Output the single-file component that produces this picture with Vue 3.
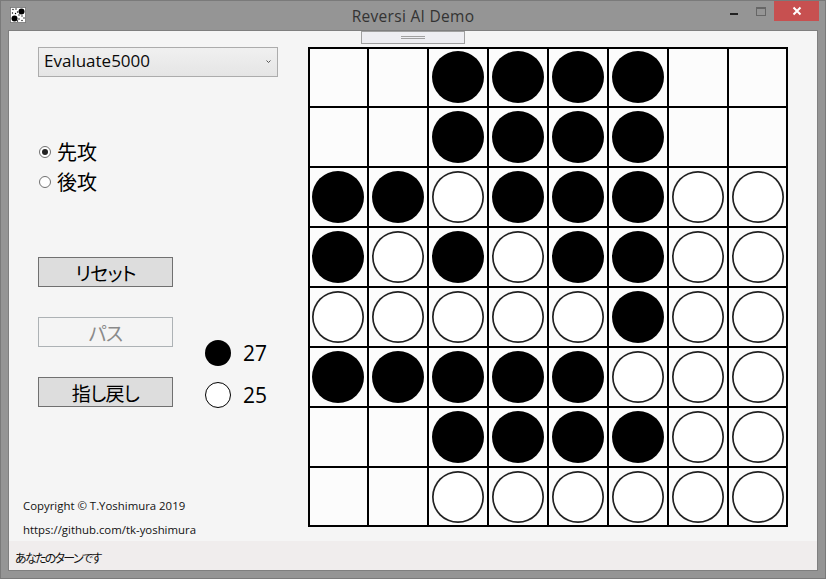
<template>
  <div class="window">
    <div class="titlebar">
      <svg class="app-icon" width="16" height="16" viewBox="0 0 16 16">
        <rect x="0.5" y="0.5" width="15" height="15" fill="#fff" stroke="#444" stroke-dasharray="1 1" />
        <g fill="#000">
          <circle v-for="d in dots" :key="d[0] + '-' + d[1]" :cx="d[0]" :cy="d[1]" r="0.7" />
        </g>
        <circle cx="11.5" cy="4.5" r="3" fill="#000" />
        <circle cx="4.5" cy="11.5" r="3" fill="#000" />
      </svg>
      <div class="title">Reversi AI Demo</div>
      <div class="controls">
        <span class="min"></span>
        <span class="max"></span>
        <span class="close">
          <svg width="10" height="10" viewBox="0 0 10 10">
            <path d="M1.5 1.5 L8.5 8.5 M8.5 1.5 L1.5 8.5" stroke="#fff" stroke-width="2" fill="none" />
          </svg>
        </span>
      </div>
    </div>

    <div class="client">
      <div class="handle"><i></i><i></i></div>

      <div class="main">
        <div class="side">
          <div class="combo">
            <span class="combo-text">Evaluate5000</span>
            <svg width="5" height="4" viewBox="0 0 5 4">
              <path d="M0.5 0.5 L2.5 2.5 L4.5 0.5" stroke="#555" stroke-width="1" fill="none" />
            </svg>
          </div>

          <div class="radios">
            <div class="radio">
              <span class="mark on"></span>
              <span class="label">先攻</span>
            </div>
            <div class="radio">
              <span class="mark"></span>
              <span class="label">後攻</span>
            </div>
          </div>

          <div class="actions">
            <div class="buttons">
              <div class="btn">リセット</div>
              <div class="btn disabled">パス</div>
              <div class="btn">指し戻し</div>
            </div>
            <div class="score">
              <div class="score-row">
                <span class="disc black"></span>
                <span>27</span>
              </div>
              <div class="score-row">
                <span class="disc white"></span>
                <span>25</span>
              </div>
            </div>
          </div>

          <div class="credits">
            <div>Copyright © T.Yoshimura 2019</div>
            <div>https://github.com/tk-yoshimura</div>
          </div>
        </div>

        <div class="board">
          <div class="cell" v-for="(c, i) in cells" :key="i">
            <span v-if="c !== '.'" class="piece" :class="c === 'B' ? 'black' : 'white'"></span>
          </div>
        </div>
      </div>

      <div class="status">あなたのターンです</div>
    </div>
  </div>
</template>

<script setup>
const rows = [
  '..BBBB..',
  '..BBBB..',
  'BBWBBBWW',
  'BWBWBBWW',
  'WWWWWBWW',
  'BBBBBWWW',
  '..BBBBWW',
  '..WWWWWW'
]
const cells = rows.join('').split('')

const dots = [
  [3, 2.5], [6, 2], [7.5, 5], [2.5, 6], [5.5, 6.5], [9, 8], [12, 9], [14, 11], [9, 12], [12, 13.5], [7.5, 14]
]
</script>

<style>
html, body {
  margin: 0;
  background: #959595;
}
</style>

<style scoped>
.window {
  width: 826px;
  height: 579px;
  box-sizing: border-box;
  background: #959595;
  border: 1px solid #7a7a7a;
  display: flex;
  flex-direction: column;
  font-family: "Noto Sans CJK JP", "Noto Sans", sans-serif;
  font-feature-settings: "palt";
  color: #000;
  overflow: hidden;
}

.titlebar {
  height: 29px;
  flex: none;
  display: flex;
  position: relative;
}

.app-icon {
  position: absolute;
  left: 9px;
  top: 6px;
}

.title {
  flex: 1;
  text-align: center;
  font-family: "Open Sans", sans-serif;
  font-size: 15.5px;
  line-height: 31px;
  color: #333;
  letter-spacing: 0.3px;
}

.controls {
  position: absolute;
  right: 6px;
  top: 0;
  display: flex;
  align-items: flex-start;
}

.min {
  width: 8px;
  height: 2px;
  background: #222;
  margin: 12px 18px 0 0;
}

.max {
  width: 8px;
  height: 6px;
  border: 1px solid #666;
  border-top-width: 2px;
  margin: 6px 8px 0 0;
}

.close {
  width: 45px;
  height: 20px;
  background: #c75050;
  display: flex;
  align-items: center;
  justify-content: center;
}

.client {
  flex: 1;
  margin: 0 7px 7px;
  border: 1px solid #7f7f7f;
  background: #f5f5f5;
  display: flex;
  flex-direction: column;
  position: relative;
  min-height: 0;
}

.handle {
  position: absolute;
  left: 352px;
  top: 0;
  width: 102px;
  height: 11px;
  background: #eeeef2;
  border: 1px solid #a0a0a0;
  display: flex;
  flex-direction: column;
  align-items: center;
  justify-content: center;
  gap: 1px;
}

.handle i {
  display: block;
  width: 24px;
  height: 1px;
  background: #a0a0a0;
}

.main {
  flex: 1;
  display: flex;
  padding-top: 16px;
  min-height: 0;
}

.side {
  width: 299px;
  flex: none;
  display: flex;
  flex-direction: column;
}

.combo {
  width: 240px;
  height: 30px;
  flex: none;
  box-sizing: border-box;
  margin-left: 29px;
  padding: 0 6px 0 5px;
  border: 1px solid #acacac;
  background: linear-gradient(#f0f0f0, #e5e5e5);
  display: flex;
  align-items: center;
  justify-content: space-between;
  font-family: "Open Sans", sans-serif;
  font-size: 17px;
  color: #0a0a0a;
}

.combo-text {
  margin-top: -4px;
}

.radios {
  margin: 60px 0 0 30px;
  display: flex;
  flex-direction: column;
}

.radio {
  height: 30px;
  display: flex;
  align-items: center;
  gap: 6px;
  font-size: 20px;
}

.label {
  margin-top: -2px;
}

.mark {
  width: 10px;
  height: 10px;
  border: 1px solid #707070;
  border-radius: 50%;
  background: #fff;
  position: relative;
}

.mark.on::after {
  content: "";
  position: absolute;
  left: 2px;
  top: 2px;
  width: 6px;
  height: 6px;
  border-radius: 50%;
  background: #222;
}

.actions {
  margin: 60px 0 0 29px;
  display: flex;
}

.buttons {
  display: flex;
  flex-direction: column;
  gap: 30px;
}

.btn {
  width: 135px;
  height: 30px;
  box-sizing: border-box;
  background: #dddddd;
  border: 1px solid #707070;
  font-size: 19px;
  line-height: 29px;
  letter-spacing: -0.7px;
  text-align: center;
}

.btn.disabled {
  background: #f4f4f4;
  border-color: #adb2b5;
  color: #8a8a8a;
}

.score {
  margin: 83px 0 0 32px;
  display: flex;
  flex-direction: column;
  gap: 16px;
}

.score-row {
  height: 26px;
  display: flex;
  align-items: center;
  gap: 12px;
  font-family: "Open Sans", sans-serif;
  font-size: 21px;
}

.disc {
  width: 26px;
  height: 26px;
  box-sizing: border-box;
  border-radius: 50%;
}

.disc.black {
  background: #000;
}

.disc.white {
  background: #fff;
  border: 1px solid #000;
}

.credits {
  margin: auto 0 -1px 14px;
  font-family: "Open Sans", sans-serif;
  font-size: 11.4px;
  line-height: 24px;
  color: #111;
}

.board {
  width: 480px;
  height: 480px;
  flex: none;
  box-sizing: border-box;
  padding: 2px;
  gap: 2px;
  background: #000;
  display: grid;
  grid-template-columns: 57px repeat(6, 58px) 57px;
  grid-template-rows: 57px repeat(6, 58px) 57px;
}

.cell {
  background: #fcfcfc;
  display: flex;
  align-items: center;
  justify-content: center;
  min-width: 0;
  min-height: 0;
}

.piece {
  width: 52px;
  height: 52px;
  flex: none;
  box-sizing: border-box;
  border-radius: 50%;
}

/* first row and column cells are 1px short, keep pieces on the pitch */
.cell:nth-child(8n+1) .piece {
  margin-right: 1px;
}

.cell:nth-child(-n+8) .piece {
  margin-bottom: 1px;
}

.piece.black {
  background: #000;
}

.piece.white {
  background: #fff;
  box-shadow: inset 0 0 0 1.7px #222;
}

.status {
  height: 29px;
  flex: none;
  background: #f0eded;
  padding-left: 6px;
  font-size: 12px;
  line-height: 33px;
  letter-spacing: -1.7px;
  color: #111;
}
</style>
